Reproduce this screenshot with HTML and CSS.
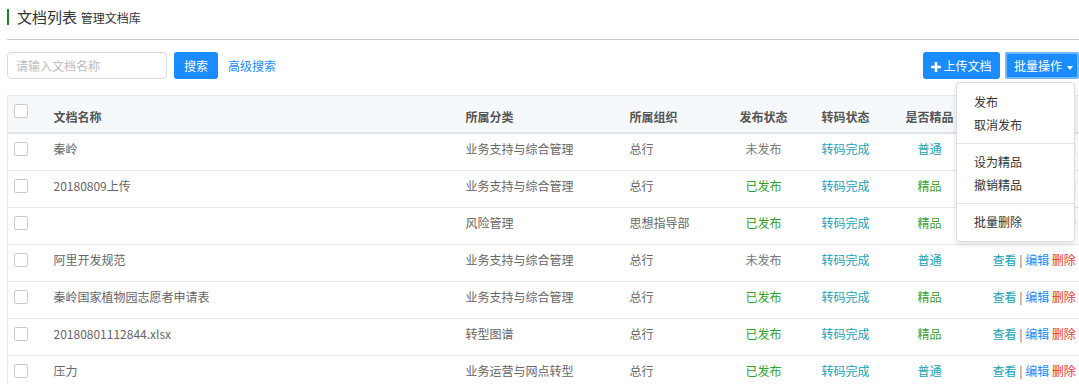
FILE: index.html
```html
<!DOCTYPE html>
<html lang="zh-CN">
<head>
    <meta charset="UTF-8">
    <title>文档列表</title>
    <link rel="stylesheet" href="styles.css">
</head>
<body>
    <div class="page">
        <div class="page-title">
            <span class="title-main">文档列表</span>
            <span class="title-sub">管理文档库</span>
        </div>
        <div class="title-rule"></div>

        <div class="toolbar">
            <input type="text" class="search-input" placeholder="请输入文档名称">
            <button class="btn btn-primary">搜索</button>
            <a class="link-advanced" href="#">高级搜索</a>
            <div class="toolbar-right">
                <button class="btn btn-primary btn-upload">
                    <svg class="plus" width="10" height="10" viewBox="0 0 10 10"><path d="M3.7 0h2.6v3.7H10v2.6H6.3V10H3.7V6.3H0V3.7h3.7z" fill="#fff"/></svg>上传文档
                </button>
                <div class="batch">
                    <button class="btn btn-primary btn-batch">批量操作<span class="caret"></span></button>
                    <ul class="dropdown">
                        <li>发布</li>
                        <li>取消发布</li>
                        <li class="divider"></li>
                        <li>设为精品</li>
                        <li>撤销精品</li>
                        <li class="divider"></li>
                        <li>批量删除</li>
                    </ul>
                </div>
            </div>
        </div>

        <table class="doc-table">
            <colgroup>
                <col style="width:38px">
                <col style="width:412px">
                <col style="width:164px">
                <col style="width:92px">
                <col style="width:100px">
                <col style="width:64px">
                <col style="width:104px">
                <col style="width:108px">
            </colgroup>
            <thead>
                <tr>
                    <th class="cell-check"><span class="checkbox"></span></th>
                    <th>文档名称</th>
                    <th>所属分类</th>
                    <th>所属组织</th>
                    <th class="center">发布状态</th>
                    <th class="center">转码状态</th>
                    <th class="center">是否精品</th>
                    <th class="ops">操作</th>
                </tr>
            </thead>
            <tbody>
                <tr>
                    <td class="cell-check"><span class="checkbox"></span></td>
                    <td>秦岭</td>
                    <td>业务支持与综合管理</td>
                    <td>总行</td>
                    <td class="center st-draft">未发布</td>
                    <td class="center st-info">转码完成</td>
                    <td class="center st-info">普通</td>
                    <td class="ops"><a class="op-view">查看</a> | <a class="op-edit">编辑</a> <a class="op-del">删除</a></td>
                </tr>
                <tr>
                    <td class="cell-check"><span class="checkbox"></span></td>
                    <td>20180809上传</td>
                    <td>业务支持与综合管理</td>
                    <td>总行</td>
                    <td class="center st-ok">已发布</td>
                    <td class="center st-info">转码完成</td>
                    <td class="center st-best">精品</td>
                    <td class="ops"><a class="op-view">查看</a> | <a class="op-edit">编辑</a> <a class="op-del">删除</a></td>
                </tr>
                <tr>
                    <td class="cell-check"><span class="checkbox"></span></td>
                    <td></td>
                    <td>风险管理</td>
                    <td>思想指导部</td>
                    <td class="center st-ok">已发布</td>
                    <td class="center st-info">转码完成</td>
                    <td class="center st-best">精品</td>
                    <td class="ops"><a class="op-view">查看</a> | <a class="op-edit">编辑</a> <a class="op-del">删除</a></td>
                </tr>
                <tr>
                    <td class="cell-check"><span class="checkbox"></span></td>
                    <td>阿里开发规范</td>
                    <td>业务支持与综合管理</td>
                    <td>总行</td>
                    <td class="center st-draft">未发布</td>
                    <td class="center st-info">转码完成</td>
                    <td class="center st-info">普通</td>
                    <td class="ops"><a class="op-view">查看</a> | <a class="op-edit">编辑</a> <a class="op-del">删除</a></td>
                </tr>
                <tr>
                    <td class="cell-check"><span class="checkbox"></span></td>
                    <td>秦岭国家植物园志愿者申请表</td>
                    <td>业务支持与综合管理</td>
                    <td>总行</td>
                    <td class="center st-ok">已发布</td>
                    <td class="center st-info">转码完成</td>
                    <td class="center st-best">精品</td>
                    <td class="ops"><a class="op-view">查看</a> | <a class="op-edit">编辑</a> <a class="op-del">删除</a></td>
                </tr>
                <tr>
                    <td class="cell-check"><span class="checkbox"></span></td>
                    <td>20180801112844.xlsx</td>
                    <td>转型图谱</td>
                    <td>总行</td>
                    <td class="center st-ok">已发布</td>
                    <td class="center st-info">转码完成</td>
                    <td class="center st-best">精品</td>
                    <td class="ops"><a class="op-view">查看</a> | <a class="op-edit">编辑</a> <a class="op-del">删除</a></td>
                </tr>
                <tr>
                    <td class="cell-check"><span class="checkbox"></span></td>
                    <td>压力</td>
                    <td>业务运营与网点转型</td>
                    <td>总行</td>
                    <td class="center st-ok">已发布</td>
                    <td class="center st-info">转码完成</td>
                    <td class="center st-info">普通</td>
                    <td class="ops"><a class="op-view">查看</a> | <a class="op-edit">编辑</a> <a class="op-del">删除</a></td>
                </tr>
            </tbody>
        </table>
    </div>
</body>
</html>
```

FILE: styles.css
```css
/* 全体 */
body {
    margin: 0;
    font-family: "Noto Sans CJK SC", "Noto Sans", sans-serif;
    font-size: 12px;
    color: #666;
    background: #fff;
    overflow: hidden;
}

.page {
    width: 1072px;
    padding: 9px 0 0 7px;
}

/* 标题 */
.page-title {
    border-left: 2px solid #1b8a1b;
    padding-left: 8px;
    height: 16px;
    line-height: 16px;
    color: #333;
}

.title-main {
    font-size: 15px;
}

.title-sub {
    font-size: 12px;
    margin-left: 1px;
}

.title-rule {
    margin-top: 14px;
    border-top: 1px solid #ccc;
}

/* 工具栏 */
.toolbar {
    display: flex;
    align-items: center;
    margin-top: 12px;
    height: 27px;
}

.search-input {
    width: 160px;
    height: 27px;
    box-sizing: border-box;
    border: 1px solid #d9d9d9;
    border-radius: 4px;
    padding: 0 8px;
    font-family: inherit;
    font-size: 12px;
    color: #333;
    outline: none;
}

.search-input::placeholder {
    color: #bbb;
}

.btn {
    height: 27px;
    border: none;
    border-radius: 3px;
    padding: 0 10px;
    font-family: inherit;
    font-size: 12px;
    color: #fff;
    cursor: pointer;
}

.btn-primary {
    background-color: #1a8cff;
}

.toolbar > .btn {
    margin-left: 7px;
    width: 44px;
    padding: 0;
}

.link-advanced {
    margin-left: 10px;
    color: #1a8cff;
    text-decoration: none;
}

.toolbar-right {
    margin-left: auto;
    display: flex;
    gap: 5px;
}

.btn-upload {
    width: 77px;
    padding: 0;
    margin-left: 1px;
}

.plus {
    margin-right: 2px;
    vertical-align: -1px;
}

.batch {
    position: relative;
}

.btn-batch {
    width: 74px;
    text-align: left;
    padding: 0 0 0 9px;
    box-shadow: inset 0 0 0 2px #76b8f7;
}

.caret {
    display: inline-block;
    margin-left: 5px;
    vertical-align: middle;
    border-top: 4px solid #fff;
    border-left: 3px solid transparent;
    border-right: 3px solid transparent;
}

/* 下拉菜单 */
.dropdown {
    position: absolute;
    top: 30px;
    right: 4px;
    width: 119px;
    box-sizing: border-box;
    margin: 0;
    padding: 7px 0 8px;
    list-style: none;
    background: #fff;
    border: 1px solid #ddd;
    border-radius: 4px;
    box-shadow: 0 2px 6px rgba(0, 0, 0, 0.12);
    z-index: 10;
}

.dropdown li {
    padding: 0 17px;
    line-height: 23px;
    color: #333;
}

.dropdown li.divider {
    height: 1px;
    padding: 0;
    margin: 7px 0 6px;
    background: #e5e5e5;
}

/* 表格 */
.doc-table {
    margin-top: 16px;
    width: 1082px;
    table-layout: fixed;
    border-collapse: collapse;
    border-top: 1px solid #e6e9ee;
    border-left: 1px solid #e6e9ee;
}

.doc-table th,
.doc-table td {
    text-align: left;
    vertical-align: top;
    line-height: 20px;
    white-space: nowrap;
    overflow: hidden;
}

.doc-table th {
    background-color: #f6f9fc;
    color: #555;
    font-weight: bold;
    padding: 11px 8px 5px;
    border-bottom: 2px solid #dfe2e8;
}

.doc-table td {
    padding: 5px 8px 11px;
    border-bottom: 1px solid #e8e8e8;
}

.doc-table .center {
    text-align: center;
}

.doc-table .ops {
    padding-left: 11px;
    color: #666;
}

.doc-table .cell-check {
    padding: 8px 0 0 6px;
}

.checkbox {
    display: block;
    width: 14px;
    height: 14px;
    box-sizing: border-box;
    border: 1px solid #ccc;
    border-radius: 2px;
    background: #fff;
}

/* 状态颜色 */
.st-draft {
    color: #777;
}

.st-ok {
    color: #2ca02c;
}

.st-info {
    color: #17a2b8;
}

.st-best {
    color: #3d9e2a;
}

.op-view {
    color: #17a2b8;
}

.op-edit {
    color: #1a8cff;
}

.op-del {
    color: #e53935;
}
```
